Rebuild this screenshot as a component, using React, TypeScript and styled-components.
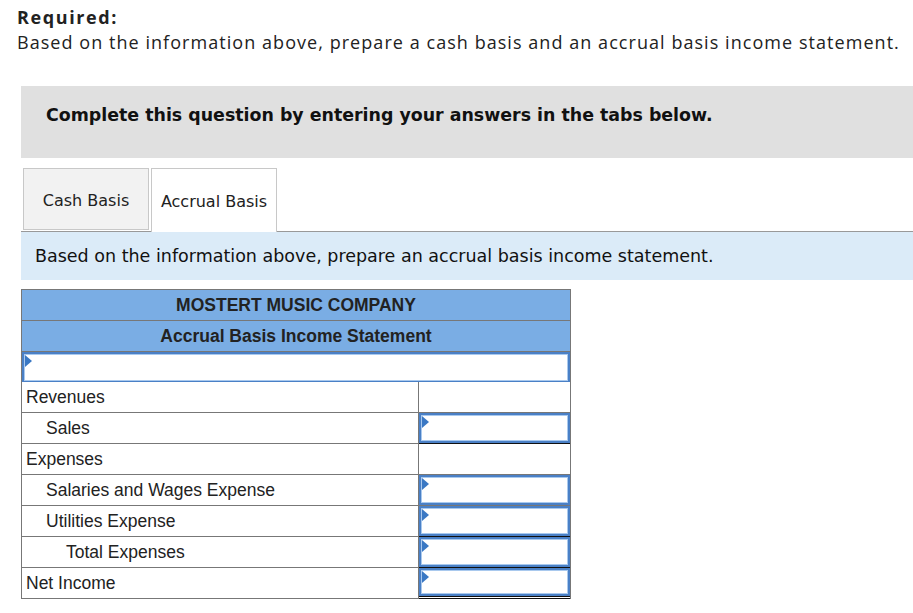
import React from 'react';
import styled, { createGlobalStyle } from 'styled-components';

const GlobalStyle = createGlobalStyle`
  body {
    margin: 0;
    background: #fff;
    color: #222;
  }
`;

const Page = styled.div`
  width: 913px;
  padding-top: 5px;
`;

const Required = styled.div`
  padding-left: 17px;
  font-family: 'Open Sans', 'Lato', sans-serif;
  font-size: 18px;
  letter-spacing: 1.05px;
  color: #222;
  line-height: 25px;
`;

const ReqTitle = styled.div`
  font-weight: bold;
  letter-spacing: 1.6px;
`;

const Body = styled.div`
  padding-left: 21px;
`;

const Instruction = styled.div`
  margin-top: 31px;
  height: 72px;
  box-sizing: border-box;
  background: #e0e0e0;
  padding: 19px 0 0 25px;
  font-family: 'DejaVu Sans', Verdana, sans-serif;
  font-weight: bold;
  font-size: 17.4px;
  color: #111;
`;

const Tabs = styled.div`
  display: flex;
  gap: 2px;
  margin-top: 10px;
  padding-left: 2px;
  position: relative;
  z-index: 1;
`;

const Tab = styled.div<{ $active?: boolean }>`
  width: 126px;
  height: ${(p) => (p.$active ? 64 : 62)}px;
  padding-top: 2px;
  box-sizing: border-box;
  border: 1px solid #c8c8c8;
  border-bottom: ${(p) => (p.$active ? 'none' : '1px solid #c8c8c8')};
  background: ${(p) => (p.$active ? '#fff' : '#f2f2f2')};
  display: flex;
  align-items: center;
  justify-content: center;
  font-family: 'DejaVu Sans', Verdana, sans-serif;
  font-size: 16px;
  color: #222;
`;

const Prompt = styled.div`
  margin-top: -1px;
  height: 48px;
  border-top: 1px solid #999;
  background: #dbebf8;
  display: flex;
  align-items: center;
  padding-left: 14px;
  font-family: 'DejaVu Sans', Verdana, sans-serif;
  font-size: 17.5px;
  color: #111;
`;

const Table = styled.div`
  margin-top: 9px;
  width: 548px;
  border: 1px solid #777;
  border-bottom: none;
  font-family: 'Liberation Sans', Arial, sans-serif;
  font-size: 17.5px;
  color: #222;
`;

const HeadRow = styled.div`
  height: 30px;
  background: #7aade4;
  border-bottom: 1px solid #777;
  display: flex;
  align-items: center;
  justify-content: center;
  font-weight: bold;
`;

const Marker = styled.span`
  position: absolute;
  left: 1px;
  top: 1px;
  width: 0;
  height: 0;
  border-top: 6px solid transparent;
  border-bottom: 6px solid transparent;
  border-left: 7px solid #3a78c4;
`;

const TitleInput = styled.div`
  position: relative;
  box-sizing: border-box;
  height: 30px;
  border: 2px solid #4a80c6;
  border-bottom: 1px solid #4a80c6;
  box-shadow: inset 0 0 0 1px #a9c9ee;
  background: #fff;
`;

const Row = styled.div`
  display: grid;
  grid-template-columns: 397px 1fr;
  height: 31px;
`;

const Label = styled.div<{ $indent: number }>`
  border-bottom: 1px solid #777;
  border-right: 1px solid #777;
  display: flex;
  align-items: center;
  padding-left: ${(p) => 4 + p.$indent * 20}px;
`;

const Value = styled.div<{ $under?: 'single' | 'double' | 'gray' }>`
  box-sizing: border-box;
  height: 31px;
  border-bottom: ${(p) =>
    p.$under === 'double'
      ? '3px double #111'
      : p.$under === 'single'
      ? '1px solid #111'
      : '1px solid #777'};
`;

const CellInput = styled.div<{ $short?: boolean }>`
  position: relative;
  box-sizing: border-box;
  height: ${(p) => (p.$short ? 28 : 30)}px;
  border: 2px solid #4a80c6;
  box-shadow: inset 0 0 0 1px #a9c9ee;
  background: #fff;
`;

type Line = {
  label: string;
  indent: number;
  input: boolean;
  under?: 'single' | 'double' | 'gray';
};

const lines: Line[] = [
  { label: 'Revenues', indent: 0, input: false },
  { label: 'Sales', indent: 1, input: true, under: 'single' },
  { label: 'Expenses', indent: 0, input: false },
  { label: 'Salaries and Wages Expense', indent: 1, input: true, under: 'gray' },
  { label: 'Utilities Expense', indent: 1, input: true, under: 'single' },
  { label: 'Total Expenses', indent: 2, input: true, under: 'single' },
  { label: 'Net Income', indent: 0, input: true, under: 'double' },
];

export default function App() {
  return (
    <>
      <GlobalStyle />
      <Page>
        <Required>
          <ReqTitle>Required:</ReqTitle>
          Based on the information above, prepare a cash basis and an accrual basis income statement.
        </Required>
        <Body>
          <Instruction>Complete this question by entering your answers in the tabs below.</Instruction>
          <Tabs>
            <Tab>Cash Basis</Tab>
            <Tab $active>Accrual Basis</Tab>
          </Tabs>
          <Prompt>Based on the information above, prepare an accrual basis income statement.</Prompt>
          <Table>
            <HeadRow>MOSTERT MUSIC COMPANY</HeadRow>
            <HeadRow>Accrual Basis Income Statement</HeadRow>
            <TitleInput>
              <Marker />
            </TitleInput>
            {lines.map((l) => (
              <Row key={l.label}>
                <Label $indent={l.indent}>{l.label}</Label>
                <Value $under={l.input ? l.under : undefined}>
                  {l.input && (
                    <CellInput $short={l.under === 'double'}>
                      <Marker />
                    </CellInput>
                  )}
                </Value>
              </Row>
            ))}
          </Table>
        </Body>
      </Page>
    </>
  );
}
